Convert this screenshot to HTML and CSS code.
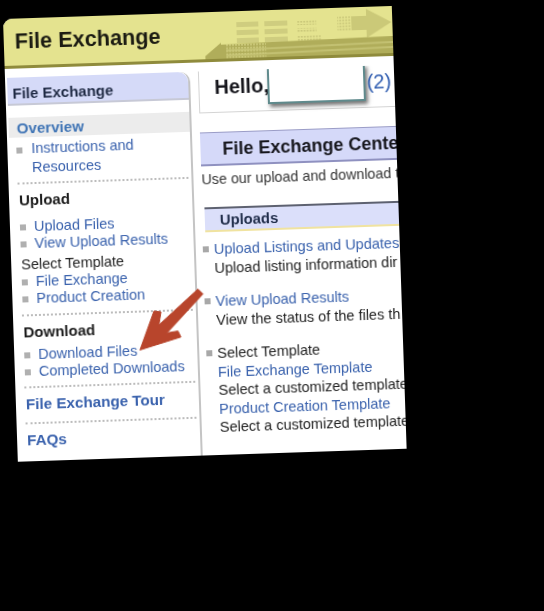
FILE: index.html
```html
<!DOCTYPE html>
<html lang="en">
<head>
<meta charset="utf-8">
<title>File Exchange</title>
<link rel="stylesheet" href="styles.css">
</head>
<body>
<div class="sheet">
  <header class="banner">
    <h1>File Exchange</h1>
    <svg class="art" viewBox="0 0 389 47" aria-hidden="true">
      <defs>
        <pattern id="dotsA" width="3" height="3" patternUnits="userSpaceOnUse">
          <rect width="2" height="1.6" fill="#cbc97a"/>
        </pattern>
      </defs>
      <g fill="#cfcd7f">
        <rect x="233" y="11" width="22" height="5"/><rect x="233" y="19" width="22" height="5"/><rect x="233" y="27" width="22" height="5"/>
        <rect x="261" y="11" width="23" height="5"/><rect x="261" y="19" width="23" height="5"/><rect x="261" y="27" width="23" height="5"/>
      </g>
      <g fill="url(#dotsA)">
        <rect x="293" y="11" width="20" height="5"/><rect x="293" y="19" width="20" height="5"/><rect x="293" y="27" width="24" height="5"/>
        <rect x="334" y="9" width="14" height="14"/>
      </g>
      <path d="M348 9h15V2l25 14-25 15v-8h-15z" fill="#cbc978"/>
      <path d="M296 34q18-8 36 2z" fill="#d3d184"/>
      <path d="M201 47V44L217 31V33L389 30V47z" fill="#b0ad5a"/>
      <path d="M222 38 389 35V37L222 40zM222 43 389 40V42L222 45z" fill="#c8c678" opacity=".8"/>
      <rect x="222" y="33" width="40" height="14" fill="url(#dotsA)"/>
    </svg>
  </header>
  <div class="columns">
    <nav class="side">
      <h2 class="side-title">File Exchange</h2>
      <a class="overview" href="#">Overview</a>
      <ul class="links first">
        <li><a href="#">Instructions and<br>Resources</a></li>
      </ul>
      <hr class="dots">
      <h3>Upload</h3>
      <ul class="links">
        <li><a href="#">Upload Files</a></li>
        <li><a href="#">View Upload Results</a></li>
      </ul>
      <p class="plain">Select Template</p>
      <ul class="links">
        <li><a href="#">File Exchange</a></li>
        <li><a href="#">Product Creation</a></li>
      </ul>
      <hr class="dots">
      <h3 class="tight">Download</h3>
      <ul class="links">
        <li><a href="#">Download Files</a></li>
        <li><a href="#">Completed Downloads</a></li>
      </ul>
      <hr class="dots">
      <a class="big" href="#">File Exchange Tour</a>
      <hr class="dots">
      <a class="big" href="#">FAQs</a>
    </nav>
    <main class="main">
      <div class="hello"><span>Hello,</span><span class="mask"></span><a href="#">(2)</a></div>
      <h2 class="center">File Exchange Center</h2>
      <p class="intro">Use our upload and download t</p>
      <h3 class="bar">Uploads</h3>
      <div class="item">
        <a href="#">Upload Listings and Updates</a>
        <p>Upload listing information dir</p>
      </div>
      <div class="item">
        <a href="#">View Upload Results</a>
        <p>View the status of the files th</p>
      </div>
      <div class="item">
        <p>Select Template</p>
        <a href="#">File Exchange Template</a>
        <p>Select a customized template</p>
        <a href="#">Product Creation Template</a>
        <p>Select a customized template</p>
      </div>
    </main>
  </div>
  <svg class="arrow" viewBox="120 270 80 70" aria-hidden="true">
    <path d="M185.8 276.4 190.7 281.5 153.4 319.3 164.4 317.7 167.2 323.8 125.8 335.4 141.1 296.9 148.1 298.1 145.6 311z" fill="#b8452c" stroke="#b8452c" stroke-width="1" stroke-linejoin="round"/>
  </svg>
</div>
</body>
</html>
```
FILE: styles.css
```css
* { box-sizing: border-box; }
html, body { margin: 0; height: 100%; background: #000; overflow: hidden; }
body { padding: 19px 0 0 3px; }
.sheet {
  position: relative;
  width: 389px;
  height: 443px;
  background: #fff;
  overflow: hidden;
  transform: rotate(-1.92deg);
  transform-origin: 0 0;
  border-top-left-radius: 9px;
  font-family: "Liberation Sans", Arial, sans-serif;
  color: #222;
  filter: blur(.5px);
}
a { color: #3a62ad; text-decoration: none; }
.banner {
  position: relative;
  height: 50px;
  background: #e4e38f;
  border-bottom: 3px solid #8f8b3c;
  overflow: hidden;
}
.banner h1 { margin: 0; padding: 10px 0 0 11px; font-size: 21.7px; line-height: 26px; color: #1b1b12; position: relative; z-index: 1; }
.art { position: absolute; left: 0; top: 0; width: 389px; height: 47px; }
.columns { display: flex; padding: 9px 0 0 2px; align-items: stretch; height: 393px; }
.side {
  flex: 0 0 183px;
  border-right: 2px solid #c4c4c4;
  border-top-right-radius: 10px;
}
.side-title {
  margin: 0;
  height: 28px;
  padding: 7px 0 0 5px;
  font-size: 15px;
  line-height: 18px;
  color: #1f2a44;
  background: #d5daf8;
  border-bottom: 2px solid #c7c9d6;
  border-top-right-radius: 10px;
}
.overview {
  display: block;
  margin-top: 12px;
  height: 20px;
  padding: 2px 0 0 8px;
  background: #ececec;
  font-size: 15.1px;
  line-height: 18px;
  font-weight: bold;
  color: #3f74b5;
}
.links { margin: 0; padding: 0; list-style: none; font-size: 14.5px; line-height: 17px; }
.links.first { line-height: 19px; padding-top: 2px; }
.links li { position: relative; padding-left: 22px; }
.links li::before {
  content: "";
  position: absolute;
  left: 8px;
  top: 6px;
  width: 6px;
  height: 6px;
  background: #b0b0b0;
}
.links.first li { padding-left: 22px; }
.links.first li::before { left: 7px; top: 8px; }
.dots { margin: 5px 3px 6px 7px; border: 0; border-top: 2px dotted #bcbcbc; }
.plain + .links + .dots { margin-top: 7px; }
.tight + .links + .dots { margin-top: 6px; }
.big + .dots { margin-top: 8px; }
.side h3 { margin: 0 0 9px 8px; font-size: 15px; line-height: 19px; color: #1c1c1c; }
.side h3.tight { margin-bottom: 5px; margin-top: 5px; }
.plain { margin: 4px 0 0 8px; font-size: 14.5px; line-height: 17px; }
.big { display: block; margin: 0 0 0 8px; font-size: 15.2px; line-height: 20px; font-weight: bold; color: #3a62ad; }
.big + .dots + .big { margin-top: 1px; }
.main { flex: 1 0 0; min-width: 0; padding-left: 8px; white-space: nowrap; overflow: hidden; }
.hello {
  display: flex;
  align-items: center;
  height: 51px;
  margin-top: -9px;
  padding-left: 15px;
  border: 1px solid #d4d4d4;
  border-top: 0;
  border-right: 0;
  font-size: 20px;
  font-weight: bold;
  color: #15151b;
}
.hello a { font-weight: normal; color: #2e5cb0; margin-left: 1px; }
.mask {
  flex: 0 0 98px;
  height: 37px;
  background: #fff;
  border: 2px solid #5f8a8c;
  box-shadow: 2px 3px 4px rgba(0,0,0,.55);
  margin-left: -1px;
}
.center {
  margin: 19px 0 0;
  height: 34px;
  padding: 5px 0 0 22px;
  font-size: 18px;
  line-height: 22px;
  color: #16161c;
  background: #d5d9f9;
  border-top: 1px solid #9a9cc6;
  border-bottom: 2px solid #8f91c0;
}
.intro { margin: 4px 0 0; font-size: 14.3px; line-height: 18px; color: #333; }
.bar {
  margin: 19px 0 0 2px;
  height: 25px;
  padding: 2px 0 0 15px;
  font-size: 14.8px;
  line-height: 19px;
  color: #222f4c;
  background: #dbdffa;
  border-top: 2px solid #5d6170;
  border-bottom: 2px solid #f0e3a0;
}
.item { position: relative; padding-left: 10px; font-size: 14.5px; line-height: 18.5px; margin-top: 8px; }
.item + .item { margin-top: 15px; }
.item::before {
  content: "";
  position: absolute;
  left: -1px;
  top: 6px;
  width: 6px;
  height: 6px;
  background: #a8a8a8;
}
.item a { display: block; color: #3a62ad; }
.item p { margin: 0; color: #222; }
.arrow { position: absolute; left: 120px; top: 270px; width: 80px; height: 70px; }
```
